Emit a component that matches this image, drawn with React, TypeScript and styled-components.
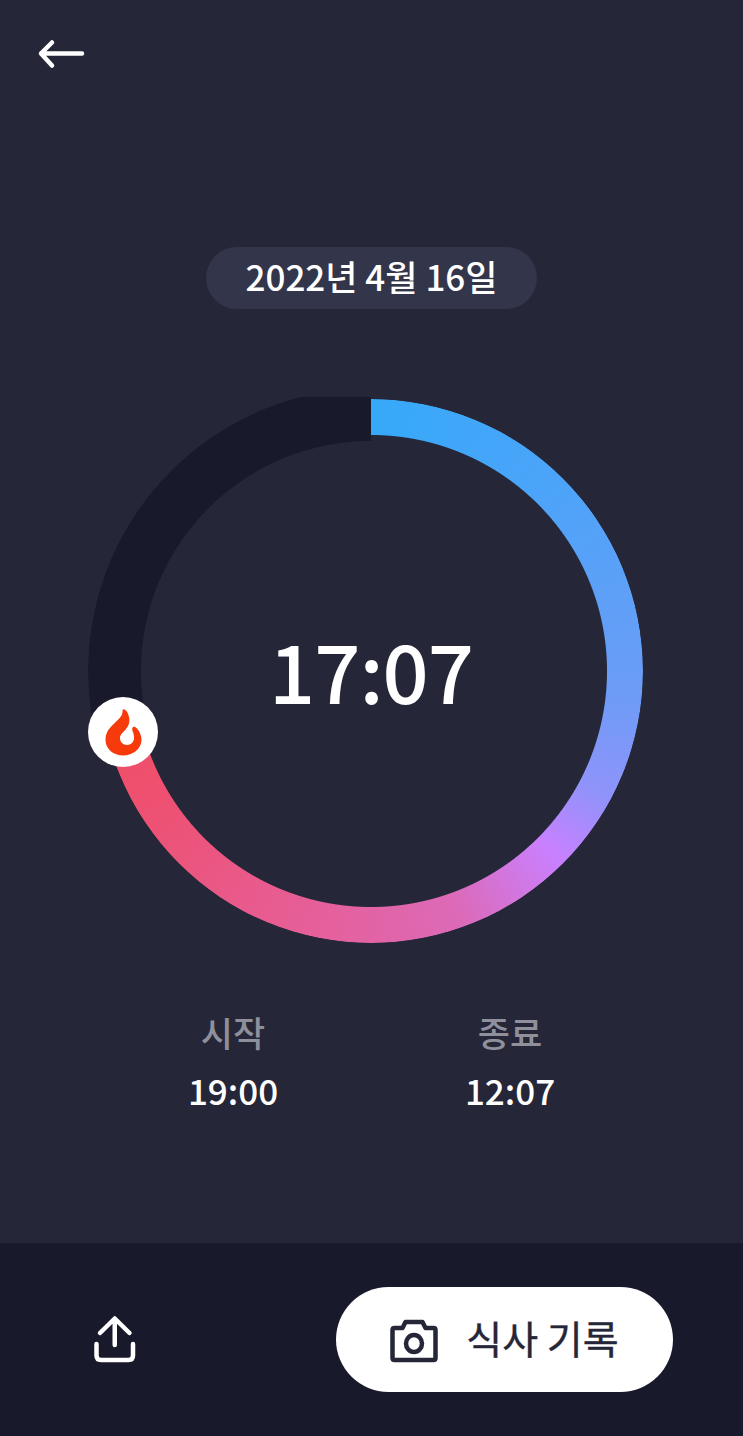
import styled, { createGlobalStyle } from "styled-components";

const GlobalStyle = createGlobalStyle`
  html, body {
    margin: 0;
    padding: 0;
    background: #252638;
  }
  body {
    font-family: "Noto Sans CJK KR", "Noto Sans", sans-serif;
    font-weight: 500;
    color: #fff;
  }
`;

const Screen = styled.div`
  display: flex;
  flex-direction: column;
  align-items: center;
  width: 743px;
  height: 1436px;
  overflow: hidden;
  background: #252638;
`;

const TopBar = styled.header`
  align-self: stretch;
  height: 247px;
  padding: 38px 0 0 37px;
  box-sizing: border-box;
`;

const DatePill = styled.div`
  display: flex;
  align-items: center;
  justify-content: center;
  width: 331px;
  height: 62px;
  padding-bottom: 6px;
  box-sizing: border-box;
  border-radius: 31px;
  background: #33354a;
  font-size: 35px;
`;

const Dial = styled.div`
  position: relative;
  display: flex;
  align-items: center;
  justify-content: center;
  width: 566px;
  height: 547px;
  margin: 88px 0 0 -1px;
  overflow: hidden;
`;

const Ring = styled.div<{ $size: number; $hole: number }>`
  position: absolute;
  top: 50%;
  left: 50%;
  width: ${(p) => p.$size}px;
  height: ${(p) => p.$size}px;
  transform: translate(-50%, -50%);
  border-radius: 50%;
  mask: radial-gradient(
    circle closest-side,
    transparent ${(p) => p.$hole - 0.5}px,
    #000 ${(p) => p.$hole + 0.5}px
  );
`;

const TrackRing = styled(Ring)`
  background: conic-gradient(transparent 0deg 256deg, #181a2b 256deg 360deg);
`;

const ProgressRing = styled(Ring)`
  background: conic-gradient(
    #36a9f8 0deg,
    #4fa3f9 50deg,
    #6c9cf6 95deg,
    #8f93fa 118deg,
    #c980ff 135deg,
    #dc6ab8 160deg,
    #e5609c 190deg,
    #ee5070 240deg,
    #ef4f66 256deg,
    transparent 256deg 360deg
  );
`;

const Marker = styled.div`
  position: absolute;
  top: 300px;
  left: 0;
  display: flex;
  align-items: center;
  justify-content: center;
  width: 70px;
  height: 70px;
  border-radius: 50%;
  background: #fff;
`;

const Clock = styled.div`
  position: relative;
  margin-bottom: 4px;
  font-size: 81px;
  line-height: 1;
  letter-spacing: -1px;
`;

const Times = styled.div`
  display: grid;
  grid-template-columns: 277px 277px;
  margin-top: 63px;
`;

const TimeColumn = styled.div`
  display: flex;
  flex-direction: column;
  align-items: center;
  gap: 8px;
`;

const TimeLabel = styled.div`
  font-size: 35px;
  line-height: 50px;
  color: #8f909b;
`;

const TimeValue = styled.div`
  font-size: 35px;
  line-height: 50px;
`;

const BottomBar = styled.footer`
  display: flex;
  align-items: center;
  justify-content: space-between;
  align-self: stretch;
  box-sizing: border-box;
  height: 193px;
  margin-top: auto;
  padding: 0 70px 0 91px;
  background: #181a2b;
`;

const IconButton = styled.button`
  display: flex;
  padding: 0;
  border: 0;
  background: none;
`;

const RecordButton = styled.button`
  display: flex;
  align-items: center;
  justify-content: center;
  gap: 28px;
  width: 337px;
  height: 105px;
  padding: 0;
  border: 0;
  border-radius: 53px;
  background: #fff;
  color: #252638;
  font-family: inherit;
  font-weight: 400;
  font-size: 39px;
  line-height: 1;
  -webkit-text-stroke: 0.4px #252638;
`;

const RecordLabel = styled.span`
  margin-bottom: 5px;
`;

const BackIcon = () => (
  <svg width="50" height="32" viewBox="0 0 50 32" fill="none" stroke="#fff" strokeWidth="4.5" strokeLinecap="round" strokeLinejoin="round">
    <path d="M15 4.5 L4 15.5 L15 27.5 M4 15.5 H45" />
  </svg>
);

const FlameIcon = () => (
  <svg width="70" height="70" viewBox="0 0 70 70" fill="#f73a0c">
    <path d="M34.5 13 C36 24 17.5 27 17.5 43 C17.5 52 25.5 58.5 35 58.5 C45 58.5 53.5 51.5 53.5 43 C53.5 37 50 31.5 47 30 C45 29 43.5 31 44.5 34 C45.5 36 46 38 46 41 C46 45 43 48 39 48 C35 48 32 45 32 41 C32 37 35.5 35.5 38 32 C41 28 42 25 41 20 C40 15 36.5 10.5 34.5 13 Z" />
  </svg>
);

const ShareIcon = () => (
  <svg width="48" height="52" viewBox="0 0 48 52" fill="none" stroke="#fff" strokeWidth="4.5" strokeLinecap="round" strokeLinejoin="round">
    <path d="M23.75 31 V5 M9 19 L23.75 4.5 L38.5 19" />
    <path d="M5.5 30 V41.5 Q5.5 46 10 46 H37.5 Q42 46 42 41.5 V30" />
  </svg>
);

const CameraIcon = () => (
  <svg width="48" height="46" viewBox="0 0 48 46" fill="none" stroke="#252638" strokeWidth="4.5" strokeLinejoin="round">
    <path d="M2.5 13 Q2.5 11 4.5 11 H12.5 L15.5 5 H32.5 L35.5 11 H43.5 Q45.5 11 45.5 13 V41 Q45.5 43 43.5 43 H4.5 Q2.5 43 2.5 41 Z" />
    <ellipse cx="24" cy="26.5" rx="8" ry="8.5" />
  </svg>
);

export default function App() {
  return (
    <Screen>
      <GlobalStyle />
      <TopBar>
        <BackIcon />
      </TopBar>
      <DatePill>2022년 4월 16일</DatePill>
      <Dial>
        <TrackRing $size={566} $hole={230} />
        <ProgressRing $size={544} $hole={236} />
        <Marker>
          <FlameIcon />
        </Marker>
        <Clock>17:07</Clock>
      </Dial>
      <Times>
        <TimeColumn>
          <TimeLabel>시작</TimeLabel>
          <TimeValue>19:00</TimeValue>
        </TimeColumn>
        <TimeColumn>
          <TimeLabel>종료</TimeLabel>
          <TimeValue>12:07</TimeValue>
        </TimeColumn>
      </Times>
      <BottomBar>
        <IconButton aria-label="공유">
          <ShareIcon />
        </IconButton>
        <RecordButton>
          <CameraIcon />
          <RecordLabel>식사 기록</RecordLabel>
        </RecordButton>
      </BottomBar>
    </Screen>
  );
}
